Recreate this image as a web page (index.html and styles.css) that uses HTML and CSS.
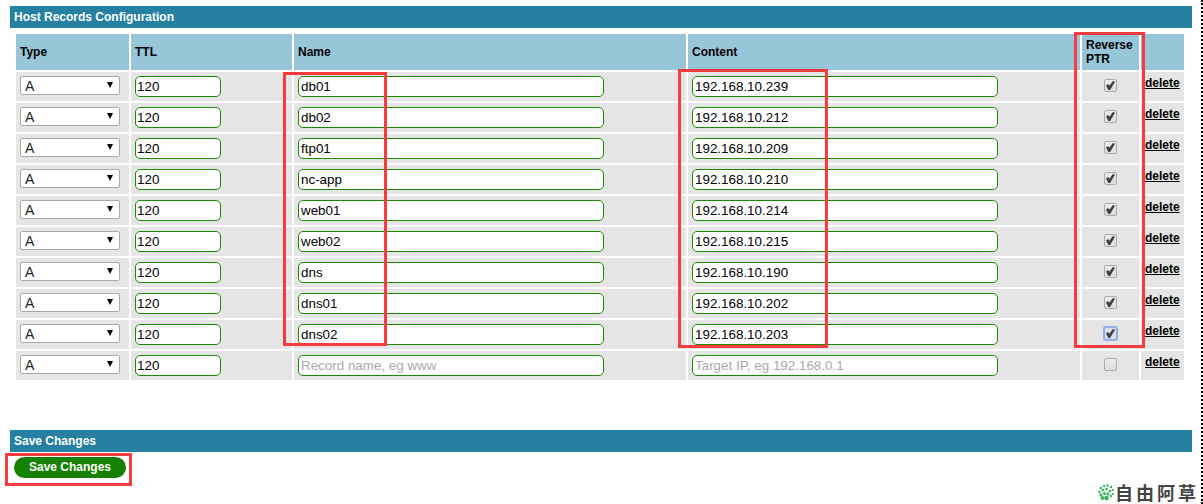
FILE: index.html
```html
<!DOCTYPE html>
<html lang="en">
<head>
<meta charset="utf-8">
<title>Host Records Configuration</title>
<link rel="stylesheet" href="styles.css">
</head>
<body>
<main class="page">
  <h2 class="bar">Host Records Configuration</h2>
  <table class="records">
    <colgroup>
      <col class="c-type"><col class="c-ttl"><col class="c-name"><col class="c-content"><col class="c-ptr"><col class="c-del">
    </colgroup>
    <thead>
      <tr><th>Type</th><th>TTL</th><th>Name</th><th>Content</th><th class="ptr-head">Reverse PTR</th><th></th></tr>
    </thead>
    <tbody>
      <tr><td><select class="sel"><option>A</option></select></td><td><input class="txt ttl" value="120"></td><td><input class="txt name" value="db01"></td><td><input class="txt content" value="192.168.10.239"></td><td class="ck"><input type="checkbox" class="box" checked></td><td class="del"><a href="#">delete</a></td></tr>
      <tr><td><select class="sel"><option>A</option></select></td><td><input class="txt ttl" value="120"></td><td><input class="txt name" value="db02"></td><td><input class="txt content" value="192.168.10.212"></td><td class="ck"><input type="checkbox" class="box" checked></td><td class="del"><a href="#">delete</a></td></tr>
      <tr><td><select class="sel"><option>A</option></select></td><td><input class="txt ttl" value="120"></td><td><input class="txt name" value="ftp01"></td><td><input class="txt content" value="192.168.10.209"></td><td class="ck"><input type="checkbox" class="box" checked></td><td class="del"><a href="#">delete</a></td></tr>
      <tr><td><select class="sel"><option>A</option></select></td><td><input class="txt ttl" value="120"></td><td><input class="txt name" value="nc-app"></td><td><input class="txt content" value="192.168.10.210"></td><td class="ck"><input type="checkbox" class="box" checked></td><td class="del"><a href="#">delete</a></td></tr>
      <tr><td><select class="sel"><option>A</option></select></td><td><input class="txt ttl" value="120"></td><td><input class="txt name" value="web01"></td><td><input class="txt content" value="192.168.10.214"></td><td class="ck"><input type="checkbox" class="box" checked></td><td class="del"><a href="#">delete</a></td></tr>
      <tr><td><select class="sel"><option>A</option></select></td><td><input class="txt ttl" value="120"></td><td><input class="txt name" value="web02"></td><td><input class="txt content" value="192.168.10.215"></td><td class="ck"><input type="checkbox" class="box" checked></td><td class="del"><a href="#">delete</a></td></tr>
      <tr><td><select class="sel"><option>A</option></select></td><td><input class="txt ttl" value="120"></td><td><input class="txt name" value="dns"></td><td><input class="txt content" value="192.168.10.190"></td><td class="ck"><input type="checkbox" class="box" checked></td><td class="del"><a href="#">delete</a></td></tr>
      <tr><td><select class="sel"><option>A</option></select></td><td><input class="txt ttl" value="120"></td><td><input class="txt name" value="dns01"></td><td><input class="txt content" value="192.168.10.202"></td><td class="ck"><input type="checkbox" class="box" checked></td><td class="del"><a href="#">delete</a></td></tr>
      <tr><td><select class="sel"><option>A</option></select></td><td><input class="txt ttl" value="120"></td><td><input class="txt name" value="dns02"></td><td><input class="txt content" value="192.168.10.203"></td><td class="ck"><input type="checkbox" class="box focus" checked></td><td class="del"><a href="#">delete</a></td></tr>
      <tr><td><select class="sel"><option>A</option></select></td><td><input class="txt ttl" value="120"></td><td><input class="txt name" placeholder="Record name, eg www"></td><td><input class="txt content" placeholder="Target IP, eg 192.168.0.1"></td><td class="ck"><input type="checkbox" class="box"></td><td class="del"><a href="#">delete</a></td></tr>
    </tbody>
  </table>
  <h2 class="bar save-bar">Save Changes</h2>
  <button class="save" type="button">Save Changes</button>
</main>

<div class="mark m-name"></div>
<div class="mark m-content"></div>
<div class="mark m-ptr"></div>
<div class="mark m-save"></div>
<div class="edge"></div>

<div class="watermark">
  <svg class="sprout" width="17" height="17" viewBox="0 0 17 17">
    <g fill="#35b457">
      <circle cx="3" cy="4" r="1.2"/><circle cx="6" cy="2" r="1.2"/><circle cx="9.5" cy="1.5" r="1.2"/><circle cx="13" cy="3" r="1.2"/><circle cx="15" cy="6" r="1.1"/>
      <circle cx="1.5" cy="8" r="1.2"/><circle cx="5" cy="6" r="1.3"/><circle cx="8.5" cy="5" r="1.3"/><circle cx="12" cy="7" r="1.3"/><circle cx="15" cy="10" r="1.1"/>
      <circle cx="3" cy="11" r="1.5"/><circle cx="6.5" cy="9.5" r="1.6"/><circle cx="10" cy="10" r="1.6"/><circle cx="13" cy="12" r="1.2"/>
      <circle cx="4.5" cy="14" r="1.9"/><circle cx="8.5" cy="14" r="2.2"/>
    </g>
  </svg>
  <span>自由阿草</span>
</div>
</body>
</html>
```
FILE: styles.css
```css
* { box-sizing: border-box; }
html, body { margin: 0; padding: 0; height: 504px; overflow: hidden; background: #fff; }
body { font-family: "Liberation Sans", Arial, sans-serif; color: #000; position: relative; }

.page { padding: 6px 11px 0 10px; }

.bar {
  margin: 0;
  height: 22px;
  padding: 0 4px;
  background: #2580a2;
  color: #fff;
  font-size: 12px;
  font-weight: bold;
  line-height: 22px;
}

.records {
  width: 1172px;
  margin: 4px 0 0 4px;
  table-layout: fixed;
  border-collapse: separate;
  border-spacing: 2px;
}
.c-type { width: 113px; }
.c-ttl { width: 161px; }
.c-name { width: 392px; }
.c-content { width: 392px; }
.c-ptr { width: 57px; }
.c-del { width: 43px; }

th {
  height: 36px;
  padding: 0 4px;
  background: #98c6d9;
  font-size: 12px;
  font-weight: bold;
  text-align: left;
  line-height: 14px;
}
td {
  height: 29px;
  padding: 0 4px;
  background: #e5e5e5;
  vertical-align: middle;
  font-size: 0;
}

.sel {
  display: block;
  appearance: none;
  width: 100px;
  height: 19px;
  margin: 0 0 2px;
  padding: 1px 0 0 4px;
  border: 1px solid #a9a9a9;
  border-radius: 2px;
  font: 14px/16px "Liberation Sans", Arial, sans-serif;
  color: #222;
  background-color: #fff;
  background-image: url("data:image/svg+xml,%3Csvg xmlns='http://www.w3.org/2000/svg' width='6' height='6'%3E%3Cpath d='M0 0h6L3 6z' fill='%23000'/%3E%3C/svg%3E");
  background-size: 6px 6px;
  background-position: 86px 5px;
  background-repeat: no-repeat;
}

.txt {
  display: block;
  height: 21px;
  margin: 0;
  padding: 0 2px;
  border: 1px solid #1c8a00;
  border-radius: 5px;
  background: #fff;
  font: 13.4px "Liberation Sans", Arial, sans-serif;
  color: #000;
  outline: none;
}
.txt::placeholder { color: #a9a9a9; opacity: 1; }
.ttl { width: 86px; padding-left: 1px; }
.name { width: 306px; }
.content { width: 306px; }

.ck { text-align: center; padding-bottom: 2px; }
.box {
  appearance: none;
  display: inline-block;
  position: relative;
  width: 13px;
  height: 13px;
  margin: 0;
  border: 1px solid #aaaaaa;
  border-radius: 2px;
  background: linear-gradient(#ececec, #dddddd);
  vertical-align: middle;
}
.box:checked::after {
  content: "";
  position: absolute;
  left: 1px;
  top: 1px;
  width: 9px;
  height: 9px;
  background: #404040;
  clip-path: polygon(0 50%, 24% 34%, 38% 54%, 76% 0, 100% 8%, 46% 100%, 26% 100%);
}
.box.focus {
  border-color: #8faee8;
  box-shadow: 0 0 0 1px #8faee8;
  background: #d9dff0;
}

.del { padding: 0 0 0 4px; vertical-align: top; }
.del a {
  display: block;
  margin-top: 4px;
  color: #000;
  font-size: 12px;
  font-weight: bold;
  line-height: 14px;
  text-decoration: underline;
}

.save-bar { margin-top: 48px; }

.save {
  display: block;
  width: 112px;
  height: 21px;
  margin: 5px 0 0 4px;
  padding: 0;
  border: 0;
  border-radius: 11px;
  background: #168000;
  color: #fff;
  font: bold 12px/21px "Liberation Sans", Arial, sans-serif;
}

.mark { position: absolute; border: 3px solid #f73b3f; pointer-events: none; }
.m-name { left: 283px; top: 72px; width: 104px; height: 274px; }
.m-content { left: 678px; top: 69px; width: 150px; height: 279px; }
.m-ptr { left: 1074px; top: 32px; width: 71px; height: 316px; }
.m-save { left: 5px; top: 453px; width: 127px; height: 33px; }

.edge {
  position: absolute;
  left: 1201px;
  top: 0;
  width: 0;
  height: 504px;
  border-left: 2px dotted #000;
}

.watermark {
  position: absolute;
  left: 1098px;
  top: 483px;
  display: flex;
  align-items: center;
  gap: 0;
}
.watermark span {
  font: bold 18px/18px "Noto Sans CJK SC", sans-serif;
  letter-spacing: 3px;
  color: #444;
}
```
